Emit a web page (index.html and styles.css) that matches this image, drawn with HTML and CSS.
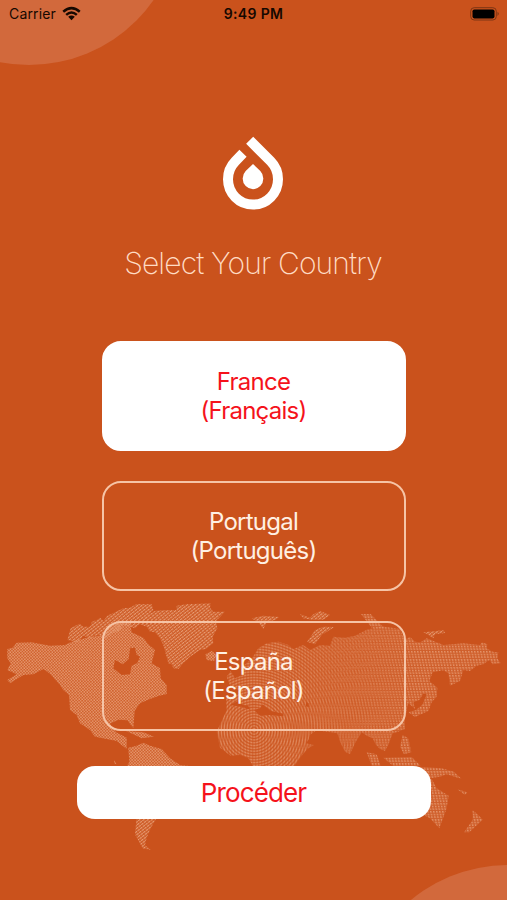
FILE: index.html
```html
<!DOCTYPE html>
<html lang="en">
<head>
    <meta charset="UTF-8">
    <meta name="viewport" content="width=device-width, initial-scale=1.0">
    <title>Select Your Country</title>
    <link rel="stylesheet" href="styles.css">
</head>
<body>
    <div class="screen">
        <div class="circle circle-top"></div>
        <div class="circle circle-bottom"></div>

        <svg class="world-map" viewBox="0 0 1521 810" aria-hidden="true">
            <defs>
                <pattern id="dots" width="9" height="9" patternUnits="userSpaceOnUse" patternTransform="rotate(4)">
                    <rect width="9" height="9" fill="#f7c3a2" opacity=".2"/>
                    <circle cx="2.5" cy="2.5" r="2.4" fill="#f7c3a2"/>
                    <circle cx="7" cy="7" r="2.4" fill="#f7c3a2"/>
                </pattern>
                <pattern id="lines" width="10" height="7.5" patternUnits="userSpaceOnUse" patternTransform="rotate(-38)">
                    <rect width="10" height="7.5" fill="#f0b18e" opacity=".15"/>
                    <rect width="8" height="3.4" fill="#f7c3a2"/>
                </pattern>
                <pattern id="grid" width="9" height="8" patternUnits="userSpaceOnUse" patternTransform="skewX(12)">
                    <rect width="9" height="8" fill="#f2b592" opacity=".2"/>
                    <rect width="4.5" height="5" fill="#f2b592"/>
                </pattern>
                <radialGradient id="rings" gradientUnits="userSpaceOnUse" cx="762" cy="405" r="8.5" spreadMethod="repeat">
                    <stop offset="0" stop-color="#f7c3a2" stop-opacity=".12"/>
                    <stop offset=".5" stop-color="#f7c3a2" stop-opacity=".75"/>
                    <stop offset="1" stop-color="#f7c3a2" stop-opacity=".12"/>
                </radialGradient>
                <pattern id="weave" width="9" height="9" patternUnits="userSpaceOnUse">
                    <rect width="9" height="9" fill="#fff"/>
                    <rect width="4" height="9" fill="#888"/>
                </pattern>
                <linearGradient id="fade-out">
                    <stop offset=".58" stop-color="#fff"/>
                    <stop offset=".82" stop-color="#fff" stop-opacity="0"/>
                </linearGradient>
                <linearGradient id="fade-in">
                    <stop offset=".58" stop-color="#fff" stop-opacity="0"/>
                    <stop offset=".82" stop-color="#fff"/>
                </linearGradient>
                <mask id="woven" maskUnits="userSpaceOnUse" x="0" y="0" width="1521" height="810"><rect width="1521" height="810" fill="url(#weave)"/></mask>
                <mask id="west" maskUnits="userSpaceOnUse" x="0" y="0" width="1521" height="810"><rect width="1521" height="810" fill="url(#fade-out)"/></mask>
                <mask id="east" maskUnits="userSpaceOnUse" x="0" y="0" width="1521" height="810"><rect width="1521" height="810" fill="url(#fade-in)"/></mask>
                <path id="eurasia" fill-rule="evenodd" d="M680 345L678 308 712 300 716 285 690 272 680 245 692 228 705 250 728 240 722 220 756 190 775 160 800 145 835 140 865 150 880 162 910 150 930 165 960 150 990 152 1000 125 1035 128 1065 122 1100 104 1145 94 1200 102 1208 122 1218 132 1230 125 1245 140 1262 142 1280 130 1330 150 1390 145 1440 150 1446 142 1462 148 1460 160 1478 170 1495 172 1492 190 1502 205 1478 208 1468 195 1450 208 1430 212 1410 228 1390 225 1380 258 1350 272 1345 235 1330 226 1298 232 1288 258 1312 278 1310 305 1295 322 1285 348 1245 366 1225 352 1248 345 1268 328 1280 298 1270 296 1258 315 1240 322 1245 342 1225 325 1215 370 1215 402 1190 412 1178 415 1165 450 1155 468 1140 462 1128 450 1118 430 1100 422 1085 412 1065 445 1050 478 1035 470 1020 440 1012 415 950 406 930 420 925 435 918 445 942 450 922 462 905 482 880 518 762 518 745 490 720 480 692 482 660 458 650 410ZM762 345L780 340 788 328 812 348 850 356 850 364 810 360 780 362ZM918 320l8 5v12l-8-4ZM690 330l24-12 15 12 16 2 5 12-22-8Z"/>
            </defs>

            <!-- North America -->
            <path fill="url(#dots)" fill-rule="evenodd" d="M22 162L38 158 50 143 95 142 150 152 195 150 215 140 260 128 310 120 330 95 350 80 390 80 395 112 430 128 445 148 465 165 455 205 480 220 482 250 500 270 500 297 475 303 450 312 420 325 404 347 400 400 382 376 355 374 330 386 348 412 380 428 380 462 350 438 320 432 285 425 270 405 240 385 230 360 210 345 207 300 190 285 178 268 150 236 130 222 100 238 70 240 30 265 22 255 50 238 22 225 32 205 22 190ZM345 195L368 208 386 192 390 160 405 158 410 180 420 185 412 204 395 212 390 238 365 240 340 220Z"/>
            <path fill="url(#lines)" d="M202 135L212 100 238 86 250 95 270 95 276 80 290 75 300 68 310 78 322 62 348 50 370 40 390 38 410 27 455 27 460 45 430 78 405 100 370 90 358 108 335 115 315 132 300 120 285 122 270 130 250 122 235 142Z"/>
            <path fill="url(#lines)" d="M440 62L465 47 500 45 530 45 530 32 560 28 632 25 630 38 640 50 675 50 648 78 652 100 638 125 640 145 618 162 600 165 570 185 550 205 535 222 520 220 515 208 505 205 490 150 480 130 465 112 450 110 440 95 420 88Z"/>
            <path fill="url(#dots)" d="M378 408L430 412 462 425 425 430ZM342 494l8 14-7-3ZM616 178L635 168 650 180 642 198 620 195Z"/>
            <!-- South America -->
            <path fill="url(#dots)" d="M385 458L410 452 430 443 450 452 485 462 510 490 540 510 575 514 600 560 560 620 500 650 465 675 440 640 405 640 385 560 375 525 388 500Z"/>
            <path fill="url(#lines)" d="M410 665L468 672 452 700 440 728 435 750 452 765 428 760 405 718Z"/>

            <!-- Europe, Africa and Asia -->
            <g mask="url(#west)">
                <use href="#eurasia" fill="url(#rings)" mask="url(#woven)"/>
            </g>
            <use href="#eurasia" fill="url(#grid)" mask="url(#east)"/>

            <!-- Arctic islands -->
            <path fill="url(#lines)" d="M755 70L790 62 838 66 825 75 800 82 790 102 775 82ZM900 58L930 68 940 58 960 48 990 60 970 74 935 74 910 70ZM921 140L932 125 945 105 970 95 1003 96 965 120 945 148ZM1270 112L1330 106 1336 114 1305 118 1300 130 1285 120Z"/>
            <path fill="url(#grid)" d="M1083 57L1112 57 1152 98 1115 98Z"/>
            <!-- Oceania -->
            <path fill="url(#grid)" d="M1208 420L1225 430 1234 472 1212 478 1200 455ZM1100 472L1130 478 1142 512 1115 512ZM1150 488L1235 486 1262 512 1180 513ZM1255 515L1325 520 1362 530 1385 552 1340 538 1320 545 1290 550ZM1220 560L1295 552 1310 580 1346 602 1340 640 1318 700 1290 670 1250 650ZM1372 583L1402 592 1395 600ZM1418 645L1435 660 1448 674 1408 712 1392 712 1418 675Z"/>
        </svg>

        <header class="status-bar">
            <div class="carrier">
                <span>Carrier</span>
                <svg class="wifi" viewBox="0 0 20 15">
                    <path d="M1.3 5.6Q10-1.9 18.7 5.6M4.4 8.9Q10 4 15.6 8.9" fill="none" stroke="#160800" stroke-width="2.6"/>
                    <path d="M6.5 11Q10 8 13.5 11L10 14.5Z" fill="#160800"/>
                </svg>
            </div>
            <div class="time">9:49 PM</div>
            <svg class="battery" viewBox="0 0 30 14">
                <rect x=".7" y=".7" width="25.6" height="12.3" rx="3.5" fill="none" stroke="#7d3514"/>
                <rect x="2.5" y="2.4" width="22" height="9" rx="1.8" fill="#000"/>
                <path d="M27.5 4.8q2.6 2 0 4.2Z" fill="#7d3514"/>
            </svg>
        </header>

        <main class="content">
            <svg class="logo" viewBox="0 0 180 225">
                <path d="M60 52L37 76A75 76 0 1 0 143 76L80 13" fill="none" stroke="#fff" stroke-width="30"/>
                <path d="M90 84L112 105A31 32 0 1 1 68 105Z" fill="#fff"/>
            </svg>
            <h1>Select Your Country</h1>

            <div class="countries">
                <button class="country selected">France<br>(Français)</button>
                <button class="country">Portugal<br>(Português)</button>
                <button class="country">España<br>(Español)</button>
            </div>

            <button class="proceed">Procéder</button>
        </main>
    </div>
</body>
</html>
```

FILE: styles.css
```css
:root {
    --orange: #ca521c;
    --light-orange: #d2693c;
    --red: #f5121b;
    --cream: #fff0e3;
}

* {
    box-sizing: border-box;
}

body {
    margin: 0;
    font-family: Inter, "Liberation Sans", sans-serif;
    background-color: var(--orange);
}

.screen {
    position: relative;
    height: 900px;
    overflow: hidden;
}

.circle {
    position: absolute;
    width: 304px;
    height: 304px;
    border-radius: 50%;
    background-color: var(--light-orange);
}

.circle-top {
    left: -123px;
    top: -239px;
}

.circle-bottom {
    left: 356px;
    top: 865px;
}

.world-map {
    position: absolute;
    left: 0;
    top: 595px;
    width: 507px;
    height: 270px;
    opacity: 0.65;
}

.status-bar {
    position: relative;
    display: grid;
    grid-template-columns: 1fr auto 1fr;
    align-items: center;
    height: 27px;
    padding: 0 7px 0 9px;
    font-size: 14px;
    color: #160800;
}

.carrier {
    display: flex;
    align-items: center;
    gap: 6px;
    letter-spacing: 0.15px;
}

.wifi {
    width: 19px;
    height: 15px;
}

.time {
    margin-right: 2px;
    font-weight: 600;
    letter-spacing: 0.35px;
}

.battery {
    width: 30px;
    height: 14px;
    justify-self: end;
}

.content {
    position: relative;
    display: flex;
    flex-direction: column;
    align-items: center;
    padding-top: 109px;
}

.logo {
    width: 60px;
    height: 75px;
    margin-right: 1px;
    overflow: visible;
}

h1 {
    margin: 32px 1px 0 0;
    font-size: 30px;
    font-weight: 250;
    line-height: 40px;
    letter-spacing: -0.85px;
    color: #ffdcc4;
}

.countries {
    display: flex;
    flex-direction: column;
    gap: 30px;
    margin-top: 58px;
}

button {
    font-family: inherit;
    padding: 0;
    border: 0;
}

.country {
    width: 304px;
    height: 110px;
    border: 2px solid #f6c4a6;
    border-radius: 19px;
    background: transparent;
    color: var(--cream);
    font-size: 24px;
    line-height: 29px;
    letter-spacing: -0.75px;
}

.country.selected {
    border-color: #fff;
    background: #fff;
    color: var(--red);
}

.proceed {
    width: 354px;
    height: 53px;
    margin-top: 35px;
    border-radius: 18px;
    background: #fff;
    color: var(--red);
    font-size: 26px;
    letter-spacing: -0.85px;
}
```
